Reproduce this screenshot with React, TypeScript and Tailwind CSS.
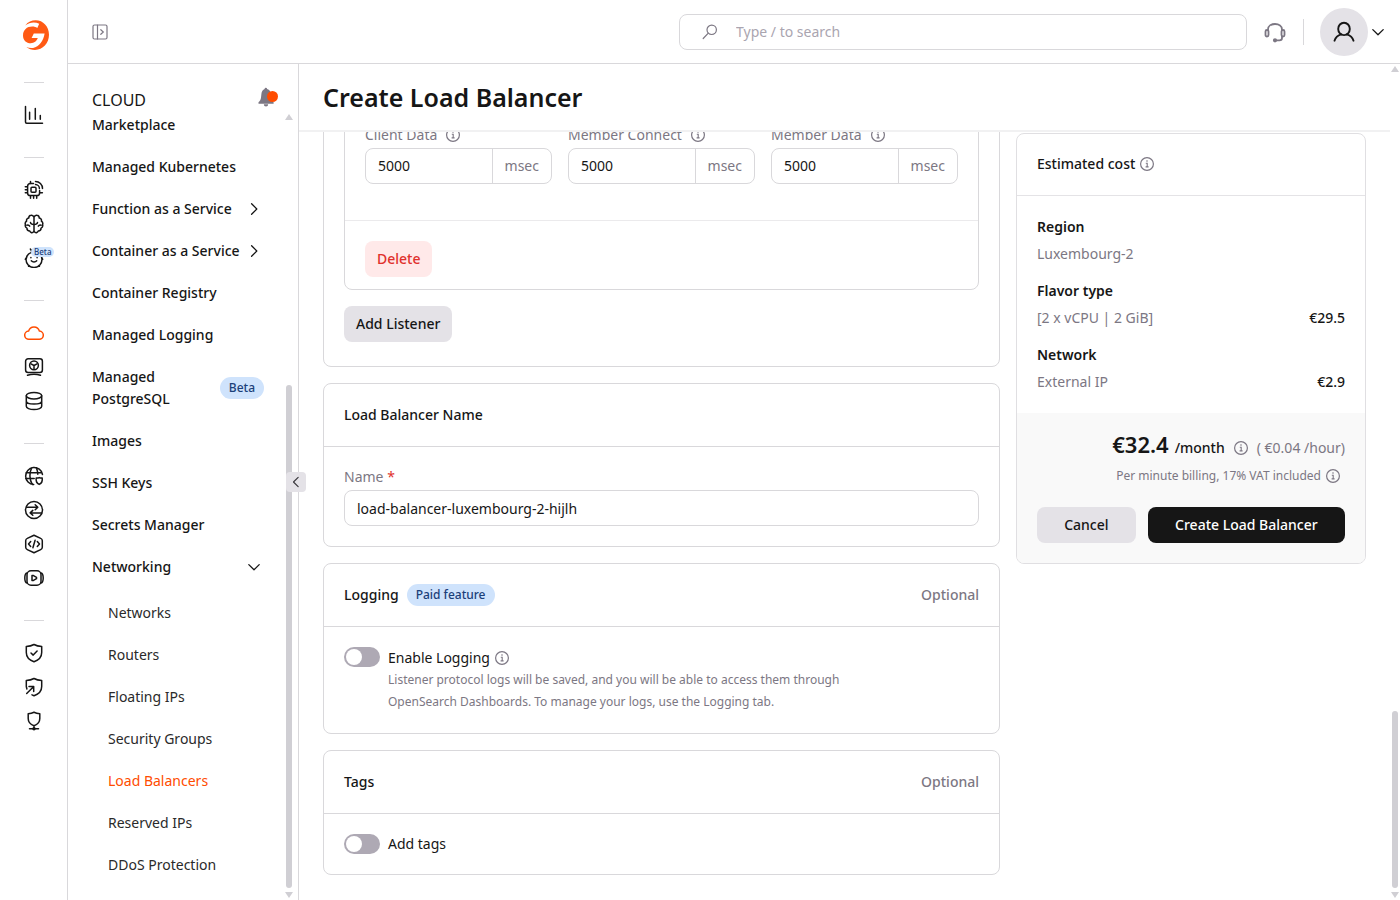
import React, { useState } from 'react';
import { clsx } from 'clsx';

type IconProps = { className?: string; children?: React.ReactNode };

function RailIcon({ className, children }: IconProps) {
  return (
    <svg
      viewBox="0 0 20 20"
      fill="none"
      stroke="currentColor"
      strokeWidth="1.5"
      strokeLinecap="round"
      strokeLinejoin="round"
      className={clsx('h-5 w-5', className)}
      aria-hidden="true"
    >
      {children}
    </svg>
  );
}

function InfoIcon({ className }: IconProps) {
  return (
    <svg viewBox="0 0 16 16" fill="none" className={clsx('h-4 w-4 shrink-0 text-[#7c7783]', className)} aria-hidden="true">
      <circle cx="8" cy="8" r="6.4" stroke="currentColor" strokeWidth="1.2" />
      <path d="M6.8 7.2h1.4v3.6M6.6 10.9h3" stroke="currentColor" strokeWidth="1.1" />
      <circle cx="8" cy="5" r="0.8" fill="currentColor" />
    </svg>
  );
}

function Chevron({ className }: IconProps) {
  return (
    <svg
      viewBox="0 0 20 20"
      fill="none"
      stroke="currentColor"
      strokeWidth="1.3"
      strokeLinecap="round"
      strokeLinejoin="round"
      className={clsx('shrink-0', className)}
      aria-hidden="true"
    >
      <path d="M4.8 7.6 10 12.800l5.200-5.200" />
    </svg>
  );
}

function Logo() {
  return (
    <svg viewBox="0 0 26 30" className="h-[30px] w-[26px]" aria-hidden="true">
      <path
        fill="#ff5a14"
        d="M2.200 5.600C5 1.800 8.600.3 12.600.3 20.200.3 26 6.600 26 14.800 26 23.400 19.800 29.900 12 29.900c-3.400 0-6.300-1-8.600-2.900 2.200 1 4.600 1.300 6.700.9 6.100-1.100 10.300-6.600 11.500-14.300H10.800L8.600 18h6.200c-1 3-3.700 5.200-7 5.200C3.300 23.200 0 20 0 15.400 0 10 3.900 6.600 9.300 6.600c2 0 3.600.5 5 1.500l1.900-4.300C12 1.600 6.600 2 2.200 5.600Z"
      />
    </svg>
  );
}

const railGroups = [
  [
    {
      name: 'Statistics',
      icon: <path d="M1.500 1.500V17a1.200 1.200 0 0 0 1.200 1.200h15.800M5.600 7.200v7M11.300 3.600v10.600M16.300 10.600v3.600" />,
    },
  ],
  [
    {
      name: 'GPU cloud',
      icon: (
        <>
          <path d="M9.500 3.600H6.200a2.600 2.600 0 0 0-2.600 2.600v6.800a2.600 2.600 0 0 0 2.600 2.600H13a2.600 2.600 0 0 0 2.600-2.600v-2.500" />
          <rect x="7" y="7.200" width="5" height="5" rx="1" />
          <path d="M6.500 3.400V1.500M1.300 6.700h2M1.300 9.700h2M1.300 12.700h2M6.500 16v2.300M9.600 16v2.300M12.700 16v2.300M16 12.700h2.400M11.500 4.500a4 4 0 0 1 3.900 4M11.500 1.500a7 7 0 0 1 7 7" />
        </>
      ),
    },
    {
      name: 'AI inference',
      icon: (
        <>
          <path d="M10 3.200C9.500 1.700 8.400 1 7.200 1.200 5.700 1.400 4.700 2.400 4.800 3.900 3 4.300 2.200 5.600 2.600 7.200 1.300 8.100.9 9.300 1.400 10.600c-.4 1.500.1 2.900 1.500 3.500 0 1.800 1.200 3 2.900 3 .7 1.400 2 1.900 3.100 1.300.8-.4 1.100-1.100 1.100-2.100ZM10 3.200C10.500 1.700 11.600 1 12.800 1.200c1.500.2 2.500 1.200 2.400 2.700 1.800.4 2.600 1.700 2.200 3.300 1.300.9 1.700 2.100 1.200 3.400.4 1.500-.1 2.900-1.500 3.500 0 1.800-1.200 3-2.900 3-.7 1.400-2 1.900-3.100 1.300-.8-.4-1.100-1.100-1.100-2.100" />
          <path d="M6.500 8.500c.2 1.500 1.600 2 3.500 2 1.900 0 3.300-.5 3.500-2M2.900 11.200c1.300-.4 2.200 0 2.800 1M17.100 11.200c-1.300-.4-2.200 0-2.800 1" />
        </>
      ),
    },
    {
      name: 'AI assistant',
      beta: true,
      icon: (
        <>
          <path d="M7.500 4.400c.4-1.300-.1-2.300-1.100-3.300M7.500 4.400A8 8 0 0 0 2 11.500a8 8 0 0 0 16 0c0-2-.6-3.700-1.800-5.100M2 10l-.7 1.300M18 10l.7 1.300M5.200 17.500l-.6.8M14.800 17.500l.6.8" />
          <path d="M7.300 12.800c1.300 1.600 4.100 1.600 5.400 0M6.900 9.400v.4M13.100 9.400v.4" />
        </>
      ),
    },
  ],
  [
    {
      name: 'Cloud',
      active: true,
      icon: <path d="M5 16.300a4.100 4.100 0 0 1-.4-8.200 5.600 5.600 0 0 1 10.800 0 4.100 4.100 0 0 1-.4 8.200Z" />,
    },
    {
      name: 'Bare metal',
      icon: (
        <>
          <rect x="1.600" y="1.800" width="16.800" height="13.700" rx="2.500" />
          <circle cx="10" cy="8.300" r="4.400" />
          <path d="m7 6.800 3 1.700 3-1.700M10 8.500v3.600M3.500 18.200c4-1.300 9-1.300 13 0" />
        </>
      ),
    },
    {
      name: 'Databases',
      icon: (
        <>
          <ellipse cx="10" cy="4.700" rx="7.700" ry="3.300" />
          <path d="M2.300 4.700v10.600c0 1.800 3.400 3.300 7.700 3.300s7.700-1.500 7.700-3.300V4.700M2.300 10c0 1.800 3.400 3.100 7.700 3.100s7.700-1.300 7.700-3.100" />
        </>
      ),
    },
  ],
  [
    {
      name: 'CDN',
      icon: (
        <>
          <path d="M18.500 8.500A8.500 8.500 0 1 0 9.700 18.500M2 6.700h15.800M1.700 12.500h8.500M7.700 1.700c-2.300 5-2.300 11.500.6 16.800M12.300 1.700c1 2.300 1.500 4.500 1.500 6.500" />
          <path d="M15.200 11.600c1 .5 2 .6 3 .4.500 3.200-.5 5.200-3 6.400-2.500-1.200-3.500-3.200-3-6.400 1 .2 2 .1 3-.4Z" />
        </>
      ),
    },
    {
      name: 'Object transfer',
      icon: (
        <>
          <circle cx="10" cy="10" r="8.500" />
          <path d="M2.500 7.300h11.300M11.200 4.800l2.600 2.500-2.600 2.400M17.500 12.900H6.200M8.800 10.400l-2.600 2.500 2.600 2.400" />
        </>
      ),
    },
    {
      name: 'FastEdge',
      icon: (
        <>
          <path d="m10 1.300 6.700 3.100a2.500 2.500 0 0 1 1.600 2.300v6.600a2.500 2.500 0 0 1-1.600 2.300L10 18.700l-6.700-3.100a2.500 2.500 0 0 1-1.600-2.300V6.700a2.500 2.500 0 0 1 1.600-2.300Z" />
          <path d="M6.700 7.500 4.500 10l2.200 2.500M13.300 7.500l2.200 2.500-2.200 2.500M11.100 6.300 8.900 13.700" />
        </>
      ),
    },
    {
      name: 'Video streaming',
      icon: (
        <>
          <rect x="3" y="2.800" width="14" height="14.400" rx="4" />
          <path d="M3 5C1.200 5.400.8 7 .8 10s.4 4.600 2.200 5M17 5c1.800.4 2.200 2 2.200 5s-.4 4.600-2.200 5M8 7.500v5l1.500-.1 3-1.700v-1.400l-3-1.700Z" />
        </>
      ),
    },
  ],
  [
    {
      name: 'Web protection',
      icon: <path d="M10 1.500c2.500 1.300 5 1.800 7.700 2v6c0 4.500-3 7.600-7.700 9.200-4.700-1.600-7.700-4.700-7.700-9.200v-6c2.700-.2 5.200-.7 7.700-2ZM7 10l2.200 2.100 3.900-4" />,
    },
    {
      name: 'DDoS protection',
      icon: <path d="M2.300 9.500v-6c2.700-.2 5.200-.7 7.700-2 2.500 1.300 5 1.800 7.700 2v6c0 4.500-3 7.600-7.700 9.200l-2-.8M2.700 16.500l6.800-6.800M5 9.500h4.700v5M2.300 9.500l.6 2.500" />,
    },
    {
      name: 'DNS',
      icon: (
        <>
          <path d="M10 1.300c1.900.9 3.700 1.300 5.800 1.500v4.700c0 3.500-2 5.900-5.800 7.200-3.800-1.300-5.800-3.700-5.800-7.200V2.800c2.100-.2 3.900-.6 5.800-1.500ZM10 14.700v3M5.500 17.700h9" />
          <circle cx="10" cy="17.700" r="1" />
        </>
      ),
    },
  ],
];

const navItems: { label: string; chevron?: 'right' | 'down'; beta?: boolean }[] = [
  { label: 'Marketplace' },
  { label: 'Managed Kubernetes' },
  { label: 'Function as a Service', chevron: 'right' },
  { label: 'Container as a Service', chevron: 'right' },
  { label: 'Container Registry' },
  { label: 'Managed Logging' },
  { label: 'Managed PostgreSQL', beta: true },
  { label: 'Images' },
  { label: 'SSH Keys' },
  { label: 'Secrets Manager' },
  { label: 'Networking', chevron: 'down' },
];

const networkingItems = [
  'Networks',
  'Routers',
  'Floating IPs',
  'Security Groups',
  'Load Balancers',
  'Reserved IPs',
  'DDoS Protection',
];

function Rail() {
  return (
    <nav aria-label="Products" className="flex w-[68px] shrink-0 flex-col items-start border-r border-[#d9d8db] pt-5 pl-6">
      <a href="#home" aria-label="Home" className="-ml-px mb-2">
        <Logo />
      </a>
      {railGroups.map((group, i) => (
        <div key={i} className="pb-px">
          <div className="mt-6 mb-[15px] h-px w-5 bg-[#d9d8db]" />
          {group.map((item: any) => (
            <a
              key={item.name}
              href="#product"
              aria-label={item.name}
              className={clsx('relative flex h-[34px] items-center', item.active ? 'text-[#ff4c00]' : 'text-[#161616]')}
            >
              <RailIcon>{item.icon}</RailIcon>
              {item.beta && (
                <span className="absolute top-[6px] left-[7px] rounded-full bg-[#cfe3fc] px-[3px] text-[8px] leading-[10px] font-medium text-[#1b4079]">
                  Beta
                </span>
              )}
            </a>
          ))}
        </div>
      ))}
    </nav>
  );
}

function TopBar() {
  return (
    <header className="flex h-16 shrink-0 items-center border-b border-[#d9d8db] pr-3 pl-6">
      <button type="button" aria-label="Expand menu" className="text-[#7c7783]">
        <svg viewBox="0 0 16 16" fill="none" stroke="currentColor" strokeWidth="1.2" strokeLinecap="round" className="h-4 w-4">
          <rect x="1" y="1" width="14" height="14" rx="1.500" />
          <path d="M5.500 1v14M8.800 5.700 11.300 8l-2.500 2.300" />
        </svg>
      </button>
      <div className="ml-auto flex h-9 w-[568px] items-center rounded-lg border border-[#d9d8db] pl-[22px]">
        <label htmlFor="search" aria-label="Search" className="text-[#7c7783]">
          <svg viewBox="0 0 16 16" fill="none" stroke="currentColor" strokeWidth="1.200" strokeLinecap="round" className="h-4 w-4">
            <circle cx="9.700" cy="5.800" r="4.700" />
            <path d="M6.300 9.200 1.200 14.500" />
          </svg>
        </label>
        <input
          id="search"
          type="text"
          aria-label="Search"
          placeholder="Type / to search"
          className="ml-[18px] min-w-0 flex-1 text-sm outline-none placeholder:text-[#aaa5b0]"
        />
      </div>
      <button type="button" aria-label="Support" className="ml-4 text-[#7c7783]">
        <svg viewBox="0 0 24 24" fill="none" stroke="currentColor" strokeWidth="1.800" strokeLinecap="round" strokeLinejoin="round" className="h-6 w-6">
          <path d="M5 10V9.500C5 6 8.100 4 12 4s7 2 7 5.500v.5M19 16.500V18c0 1.500-1 2.300-2.500 2.300H13" />
          <rect x="2.500" y="10" width="3" height="6.500" rx="1.500" />
          <rect x="18.500" y="10" width="3" height="6.500" rx="1.500" />
          <circle cx="12" cy="20.300" r="1.200" fill="currentColor" />
        </svg>
      </button>
      <div className="ml-4 h-[26px] w-px bg-[#d9d8db]" />
      <button type="button" aria-label="Account" className="ml-4 flex items-center text-[#161616]">
        <span className="flex h-12 w-12 items-center justify-center rounded-full bg-[#e4e2e7]">
          <svg viewBox="0 0 24 24" fill="none" stroke="currentColor" strokeWidth="1.900" strokeLinecap="round" className="h-6 w-6">
            <ellipse cx="12" cy="8.900" rx="5.800" ry="6.200" />
            <path d="M2.500 20.700c1-3.700 3.700-5.600 7-6.400M21.500 20.700c-1-3.700-3.700-5.600-7-6.400" />
          </svg>
        </span>
        <Chevron className="h-5 w-5" />
      </button>
    </header>
  );
}

function ScrollBar({ spacer, thumb }: { spacer: string; thumb: string }) {
  return (
    <div className="flex w-[10px] shrink-0 flex-col items-center" aria-hidden="true">
      <svg viewBox="0 0 8 6" className="h-[6px] w-2 shrink-0 fill-[#d0cfd4]">
        <path d="M4 0 8 6H0Z" />
      </svg>
      <div className={spacer} />
      <div className={clsx('w-[6px] rounded-full bg-[#d0cfd4]', thumb)} />
      <svg viewBox="0 0 8 6" className="mt-1 mb-[2px] h-[6px] w-2 shrink-0 fill-[#d0cfd4]">
        <path d="M4 6 0 0h8Z" />
      </svg>
    </div>
  );
}

function Sidebar() {
  return (
    <aside className="relative flex w-[231px] shrink-0 flex-col border-r border-[#d9d8db]">
      <div className="flex h-12 shrink-0 items-center justify-between pt-6 pr-5 pl-6">
        <h2 className="text-base leading-6 text-[#161616]">CLOUD</h2>
        <button type="button" aria-label="Notifications" className="relative mb-[6px] h-5 w-5">
          <svg viewBox="0 0 20 20" className="h-5 w-5 fill-[#7c7783]" aria-hidden="true">
            <path d="M7.800.8a1.300 1.300 0 0 1 1.300 1.200C11.600 2.700 13 4.700 13 7.300l.2 3.500c.1 2 1 3.300 2.400 4.400v1.500H.5v-1.500c1.500-1.300 2.200-2.500 2.500-4.500l.4-3.800c.2-2.500 1.500-4.200 3.200-4.900A1.300 1.300 0 0 1 7.800.8ZM5.800 17.200h4.400a2.200 2.200 0 0 1-4.400 0Z" />
          </svg>
          <span className="absolute top-1 right-0 h-[11px] w-[11px] rounded-full bg-[#ff4c00]" />
        </button>
      </div>
      <div className="flex min-h-0 flex-1 pr-1">
        <nav aria-label="Cloud" className="flex-1 overflow-hidden pr-5 pl-6">
          <ul className="-mt-2 text-sm leading-[22px] font-medium text-[#161616]">
            {navItems.map((item) => (
              <li key={item.label}>
                <a href="#section" className="flex items-center justify-between gap-1 py-[10px]">
                  <span>{item.label}</span>
                  {item.beta && (
                    <span className="rounded-full bg-[#cfe3fc] px-[9px] text-xs leading-[22px] text-[#1b4079]">Beta</span>
                  )}
                  {item.chevron && <Chevron className={clsx('h-5 w-5', item.chevron === 'right' && '-rotate-90')} />}
                </a>
              </li>
            ))}
          </ul>
          <ul className="pt-1 pl-4 text-sm leading-[22px] text-[#2a2a2a]">
            {networkingItems.map((label) => (
              <li key={label}>
                <a href="#networking" className={clsx('block py-[10px]', label === 'Load Balancers' && 'text-[#ff4c00]')}>
                  {label}
                </a>
              </li>
            ))}
          </ul>
        </nav>
        <div className="flex pt-[2px]">
          <ScrollBar spacer="grow-[265]" thumb="grow-[503]" />
        </div>
      </div>
      <button
        type="button"
        aria-label="Collapse sidebar"
        className="absolute top-[408px] right-[-8px] flex h-5 w-5 items-center justify-center rounded bg-[#e4e2e7] text-[#3a383d]"
      >
        <Chevron className="h-[18px] w-[18px] rotate-90" />
      </button>
    </aside>
  );
}

function TimeoutField({ id, label }: { id: string; label: string }) {
  return (
    <div className="flex min-w-0 flex-1 flex-col gap-[3px]">
      <label htmlFor={id} className="flex items-center gap-2 text-sm leading-5 text-[#7c7783]">
        {label}
        <InfoIcon />
      </label>
      <div className="flex h-9 rounded-lg border border-[#d9d8db] text-sm">
        <input id={id} type="text" defaultValue="5000" className="min-w-0 flex-1 rounded-l-lg px-3 outline-none" />
        <span className="flex items-center border-l border-[#d9d8db] px-3 text-[#7c7783]">msec</span>
      </div>
    </div>
  );
}

function Card({ title, badge, optional, children }: { title: string; badge?: string; optional?: boolean; children: React.ReactNode }) {
  return (
    <section className="rounded-lg border border-[#d9d8db]">
      <div className="flex items-center gap-2 border-b border-[#d9d8db] p-5 leading-[22px]">
        <h2 className="text-sm leading-[22px] font-medium">{title}</h2>
        {badge && (
          <span className="rounded-full bg-[#cfe3fc] px-[9px] text-xs leading-[22px] font-medium text-[#1b4079]">{badge}</span>
        )}
        {optional && <span className="ml-auto text-sm leading-[22px] font-medium text-[#7c7783]">Optional</span>}
      </div>
      <div className="p-5">{children}</div>
    </section>
  );
}

function Toggle({ id }: { id: string }) {
  const [on, setOn] = useState(false);

  return (
    <input
      id={id}
      type="checkbox"
      role="switch"
      checked={on}
      onChange={() => setOn(!on)}
      className="relative h-5 w-9 shrink-0 appearance-none rounded-full bg-[#aea9b4] before:absolute before:top-[2px] before:left-[2px] before:h-4 before:w-4 before:rounded-full before:bg-white checked:bg-[#ff4c00] checked:before:left-[18px]"
    />
  );
}

function CostItem({ title, value, price }: { title: string; value: string; price?: string }) {
  return (
    <div className="text-sm leading-[22px]">
      <h3 className="mb-[5px] font-semibold">{title}</h3>
      <div className="flex justify-between">
        <span className="text-[#7c7783]">{value}</span>
        <span className="font-medium">{price}</span>
      </div>
    </div>
  );
}

function CostCard() {
  return (
    <aside className="mt-px w-[350px] shrink-0 self-start overflow-hidden rounded-lg border border-[#e0dfe2]">
      <div className="flex items-center gap-1 border-b border-[#e4e3e6] px-5 pt-[19px] pb-5">
        <h2 className="text-sm leading-[22px] font-medium">Estimated cost</h2>
        <InfoIcon />
      </div>
      <div className="flex flex-col gap-[15px] p-5">
        <CostItem title="Region" value="Luxembourg-2" />
        <CostItem title="Flavor type" value="[2 x vCPU | 2 GiB]" price="€29.5" />
        <CostItem title="Network" value="External IP" price="€2.9" />
      </div>
      <div className="bg-[#f9f9f9] p-5">
        <div className="flex items-baseline justify-end gap-[6px] text-sm leading-[22px]">
          <span className="text-[22px] font-semibold">€32.4</span>
          <div className="flex items-center gap-2">
            <span className="font-medium">/month</span>
            <InfoIcon />
            <span className="text-[#7c7783]">( €0.04 /hour)</span>
          </div>
        </div>
        <div className="mt-[6px] flex items-center justify-end gap-1 pr-1 text-xs leading-[22px] text-[#7c7783]">
          Per minute billing, 17% VAT included
          <InfoIcon />
        </div>
        <div className="mt-5 flex gap-3 text-sm font-medium">
          <button type="button" className="h-9 flex-1 rounded-lg bg-[#e4e2e7]">
            Cancel
          </button>
          <button type="button" className="h-9 flex-2 rounded-lg bg-[#161616] text-white">
            Create Load Balancer
          </button>
        </div>
      </div>
    </aside>
  );
}

export default function App() {
  return (
    <div className="flex h-screen overflow-hidden bg-white font-['Noto_Sans',sans-serif] text-[#161616]">
      <Rail />
      <div className="flex min-w-0 flex-1 flex-col">
        <TopBar />
        <div className="flex min-h-0 flex-1">
          <Sidebar />
          <main className="flex min-w-0 flex-1">
            <div className="flex min-w-0 flex-1 flex-col">
              <div className="shrink-0 border-b-2 border-[#f1f1f2] px-6 pt-[17px] pb-[17px]">
                <h1 className="text-[25px] leading-8 font-semibold">Create Load Balancer</h1>
              </div>
              <div className="flex min-h-0 flex-1 gap-4 overflow-hidden px-6">
                <form className="-mt-12 flex min-w-0 flex-1 flex-col gap-4">
                  <section className="rounded-lg border border-[#d9d8db] px-5 pt-5 pb-6">
                    <div className="rounded-lg border border-[#d9d8db]">
                      <div className="flex gap-4 border-b border-[#ebeaec] px-5 pt-[19px] pb-9">
                        <TimeoutField id="client-data" label="Client Data" />
                        <TimeoutField id="member-connect" label="Member Connect" />
                        <TimeoutField id="member-data" label="Member Data" />
                      </div>
                      <div className="px-5 pt-5 pb-3">
                        <button type="button" className="h-9 rounded-lg bg-[#ffe9e9] px-3 text-sm font-medium text-[#e0312d]">
                          Delete
                        </button>
                      </div>
                    </div>
                    <button type="button" className="mt-4 h-9 rounded-lg bg-[#e4e2e7] px-3 text-sm font-medium">
                      Add Listener
                    </button>
                  </section>

                  <Card title="Load Balancer Name">
                    <div className="flex flex-col gap-[3px]">
                      <label htmlFor="name" className="text-sm leading-5 text-[#7c7783]">
                        Name <span className="text-[#e0312d]">*</span>
                      </label>
                      <input
                        id="name"
                        type="text"
                        defaultValue="load-balancer-luxembourg-2-hijlh"
                        className="h-9 rounded-lg border border-[#d9d8db] px-3 text-sm outline-none"
                      />
                    </div>
                  </Card>

                  <Card title="Logging" badge="Paid feature" optional>
                    <div className="flex gap-2">
                      <Toggle id="logging" />
                      <div>
                        <div className="flex items-center gap-1">
                          <label htmlFor="logging" className="text-sm leading-[22px]">
                            Enable Logging
                          </label>
                          <InfoIcon />
                        </div>
                        <p className="max-w-[480px] text-xs leading-[22px] text-[#7c7783]">
                          Listener protocol logs will be saved, and you will be able to access them through OpenSearch Dashboards. To
                          manage your logs, use the Logging tab.
                        </p>
                      </div>
                    </div>
                  </Card>

                  <Card title="Tags" optional>
                    <div className="flex gap-2">
                      <Toggle id="tags" />
                      <label htmlFor="tags" className="text-sm leading-5">
                        Add tags
                      </label>
                    </div>
                  </Card>
                </form>
                <CostCard />
              </div>
            </div>
            <div className="flex pt-[2px]">
              <ScrollBar spacer="grow-[639]" thumb="grow-[177]" />
            </div>
          </main>
        </div>
      </div>
    </div>
  );
}
